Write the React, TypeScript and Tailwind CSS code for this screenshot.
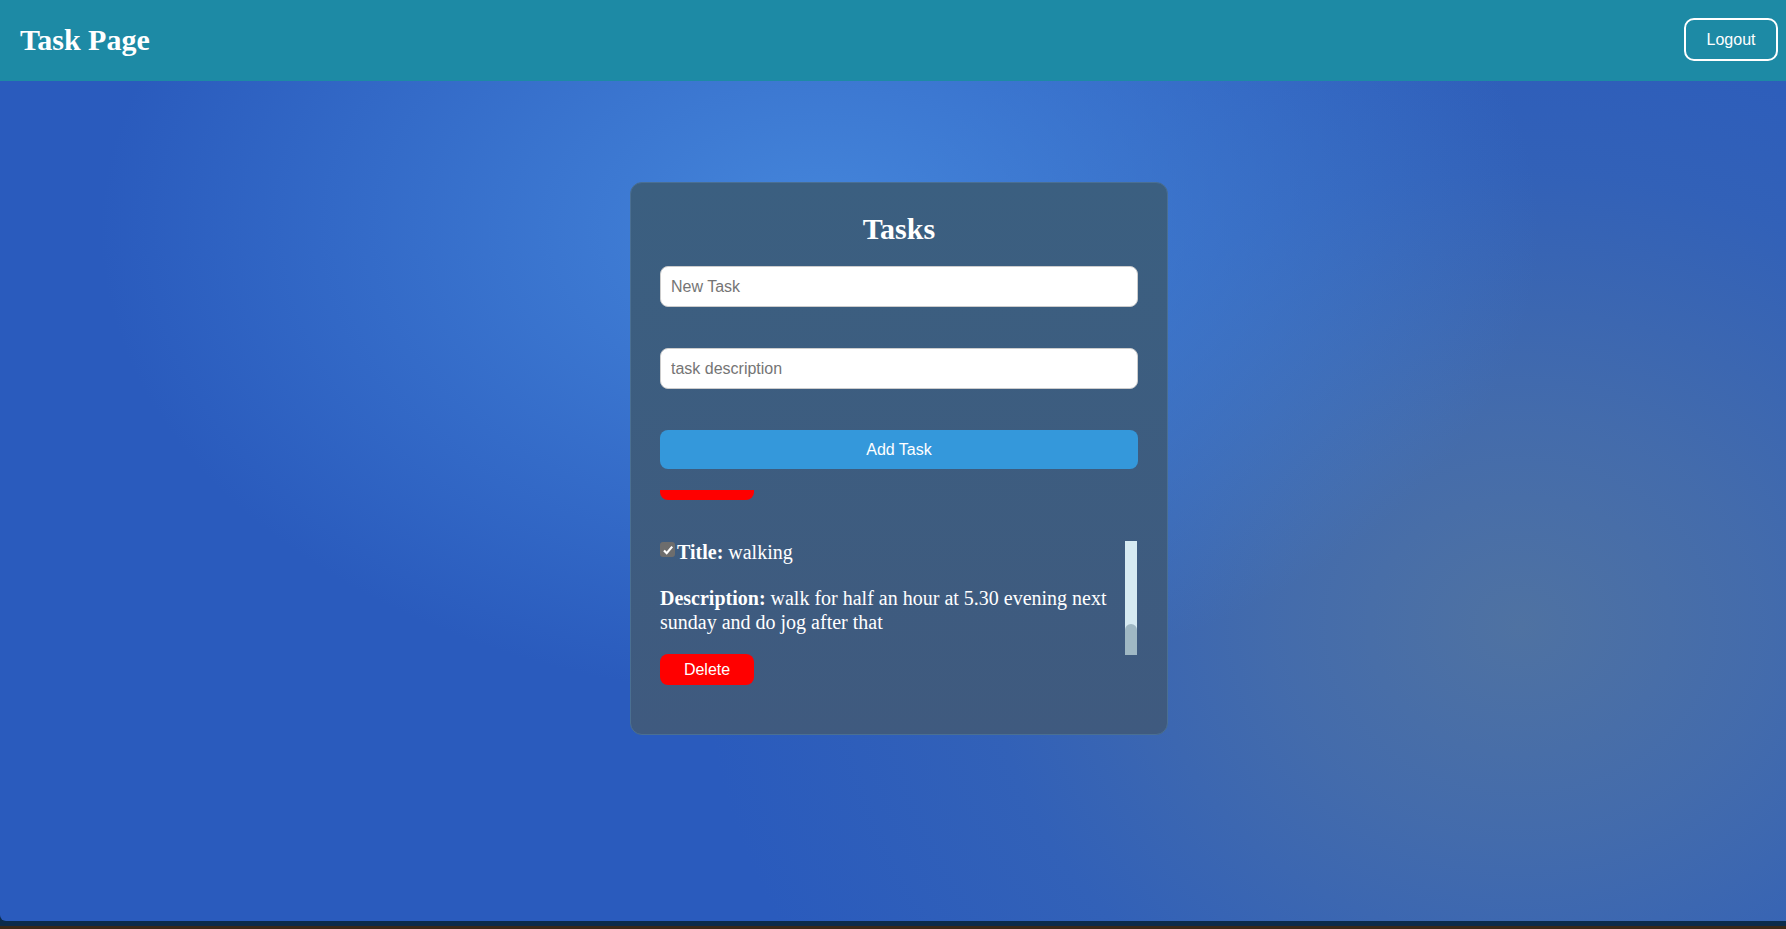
const serif = "font-['Liberation_Serif','Times_New_Roman',serif]";
const sans = "font-['Liberation_Sans',Arial,sans-serif]";

function Header() {
  return (
    <header className="flex h-[81px] items-center justify-between bg-[#1d8aa5] pl-5 pr-2">
      <h1 className={`${serif} -mt-[2px] text-[30px] font-bold leading-none text-white`}>Task Page</h1>
      <button
        className={`${sans} -mt-[2px] h-[43px] w-[94px] rounded-[10px] border-2 border-white text-[16px] text-white`}
      >
        Logout
      </button>
    </header>
  );
}

function TaskItem() {
  return (
    <div>
      <div className="flex items-start gap-[18px]">
        <div className={`${serif} w-[447px] text-[20px] text-white`}>
          <div className="flex items-start leading-[24px]">
            <span className="mr-[2px] mt-[2px] flex h-[15px] w-[15px] shrink-0 items-center justify-center rounded-[3px] bg-[#6d6d6d]">
              <svg viewBox="0 0 12 12" className="h-[12px] w-[12px]">
                <path d="M2 6.4 L4.7 9.2 L10.2 2.6" fill="none" stroke="#fff" strokeWidth="2.2" />
              </svg>
            </span>
            <p>
              <b>Title:</b> walking
            </p>
          </div>
          <p className="mt-[22px] leading-[24px]">
            <b>Description:</b> walk for half an hour at 5.30 evening next sunday and do jog after that
          </p>
        </div>
        <div className="mt-[1px] flex h-[114px] w-[12px] flex-col justify-end bg-[#d6eaf2]">
          <div className="h-[31px] rounded-t-[6px] bg-[#9fb8c4]" />
        </div>
      </div>
      <button
        className={`${sans} -mt-[1px] h-[31px] w-[94px] rounded-[8px] bg-[#ff0000] text-[16px] text-white`}
      >
        Delete
      </button>
    </div>
  );
}

export default function App() {
  return (
    <div className="h-[929px] w-full overflow-hidden bg-[#3a2818]">
      <div className="h-[926px] bg-[#0b2b4b]">
        <Header />
        <main className="flex h-[840px] justify-center rounded-bl-[6px] bg-[#2a5bbd] bg-[image:radial-gradient(ellipse_720px_470px_at_820px_150px,#4586db_0%,rgba(69,134,219,0.55)_45%,rgba(69,134,219,0)_100%),radial-gradient(ellipse_820px_700px_at_1520px_545px,#4f72a2_0%,rgba(76,113,166,0.75)_30%,rgba(62,106,176,0.4)_65%,rgba(60,104,174,0)_100%)] pl-[12px] pt-[101px]">
          <section className="h-[553px] w-[538px] rounded-[12px] border border-[#4a6f93] bg-[#3c5f80] bg-[image:linear-gradient(180deg,#3b5f80,#3f5a7f)] px-[29px] pt-[29px]">
            <h2 className={`${serif} text-center text-[30px] font-bold leading-[33px] text-white`}>Tasks</h2>
            <input
              placeholder="New Task"
              className={`${sans} mt-[21px] block h-[41px] w-full rounded-[8px] border border-[#cccccc] bg-white px-[10px] text-[16px] text-black outline-none placeholder:text-[#757575]`}
            />
            <input
              placeholder="task description"
              className={`${sans} mt-[41px] block h-[41px] w-full rounded-[8px] border border-[#cccccc] bg-white px-[10px] text-[16px] text-black outline-none placeholder:text-[#757575]`}
            />
            <button
              className={`${sans} mt-[41px] block h-[39px] w-full rounded-[8px] bg-[#3498db] text-[16px] text-white`}
            >
              Add Task
            </button>
            <div className="mt-[21px] h-[10px] w-[94px] rounded-b-[8px] bg-[#ff0000]" />
            <div className="mt-[40px]">
              <TaskItem />
            </div>
          </section>
        </main>
      </div>
    </div>
  );
}
